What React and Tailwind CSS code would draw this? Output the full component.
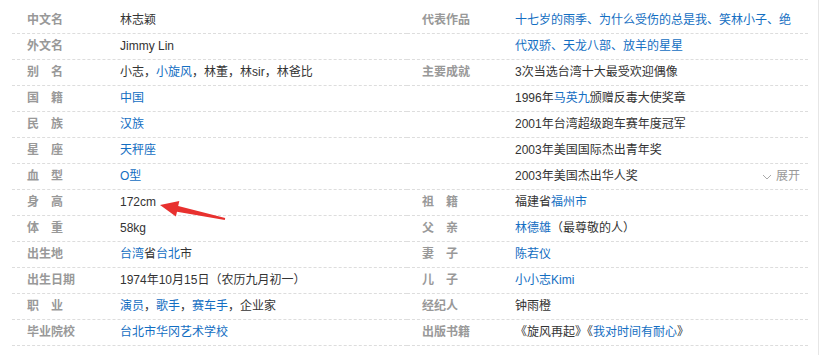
const LINK = "text-[#136ec2]";

const L = ({ children }) => <span className={LINK}>{children}</span>;

const leftRows = [
  ["中文名", <>林志颖</>],
  ["外文名", <>Jimmy Lin</>],
  ["别　名", <>小志，<L>小旋风</L>，林董，林sir，林爸比</>],
  ["国　籍", <L>中国</L>],
  ["民　族", <L>汉族</L>],
  ["星　座", <L>天秤座</L>],
  ["血　型", <L>O型</L>],
  ["身　高", <>172cm</>],
  ["体　重", <>58kg</>],
  ["出生地", <><L>台湾</L>省<L>台北</L>市</>],
  ["出生日期", <>1974年10月15日（农历九月初一）</>],
  ["职　业", <><L>演员</L>，<L>歌手</L>，<L>赛车手</L>，企业家</>],
  ["毕业院校", <L>台北市华冈艺术学校</L>],
];

const rightRows = [
  ["代表作品", <L>十七岁的雨季、为什么受伤的总是我、笑林小子、绝</L>],
  ["", <L>代双骄、天龙八部、放羊的星星</L>],
  ["主要成就", <>3次当选台湾十大最受欢迎偶像</>],
  ["", <>1996年<L>马英九</L>颁赠反毒大使奖章</>],
  ["", <>2001年台湾超级跑车赛年度冠军</>],
  ["", <>2003年美国国际杰出青年奖</>],
  ["", <>2003年美国杰出华人奖</>, true],
  ["祖　籍", <>福建省<L>福州市</L></>],
  ["父　亲", <><L>林德雄</L>（最尊敬的人）</>],
  ["妻　子", <L>陈若仪</L>],
  ["儿　子", <L>小小志Kimi</L>],
  ["经纪人", <>钟雨橙</>],
  ["出版书籍", <>《旋风再起》《<L>我对时间有耐心</L>》</>],
];

function Row({ label, value, more, labelW }) {
  return (
    <div className="flex h-[26px] items-center border-b border-dashed border-[#dddddd] pl-[15px] pr-[8px] leading-[25px]">
      <div className={`${labelW} shrink-0 font-bold text-[#999999]`}>{label}</div>
      <div className="flex-1 whitespace-nowrap text-[#333333]">{value}</div>
      {more && (
        <div className="flex items-center gap-[4px] text-[#999999]">
          <svg width="10" height="6" viewBox="0 0 10 6" className="mt-[1px]">
            <polyline points="1,1 5,5 9,1" fill="none" stroke="#aaaaaa" strokeWidth="1" />
          </svg>
          展开
        </div>
      )}
    </div>
  );
}

export default function App() {
  return (
    <div
      className="relative flex h-[355px] w-[825px] overflow-hidden bg-white text-[12px]"
      style={{ fontFamily: '"Liberation Sans", "Noto Sans CJK SC", sans-serif' }}
    >
      <div className="ml-[12px] flex pt-[8px]">
        <div className="w-[395px]">
          {leftRows.map(([k, v], i) => (
            <Row key={i} label={k} value={v} labelW="w-[93px]" />
          ))}
        </div>
        <div className="w-[401px]">
          {rightRows.map(([k, v, more], i) => (
            <Row key={i} label={k} value={v} more={more} labelW="w-[93px]" />
          ))}
        </div>
      </div>
      <div className="ml-[10px] h-full border-l border-[#e6e6e6]" />

      <svg className="pointer-events-none absolute left-0 top-0" width="825" height="355">
        <polygon
          points="160,205 179.3,201 178.2,205.9 225.2,218 224.8,220 177,211.7 175.9,216.6"
          fill="#e8312f"
        />
      </svg>
    </div>
  );
}
